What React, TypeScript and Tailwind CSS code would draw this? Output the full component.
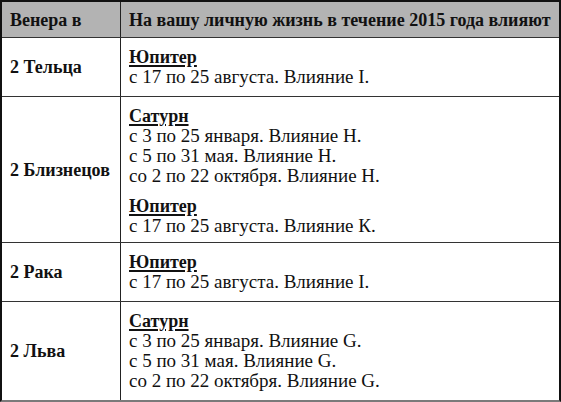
import React from "react";

type Entry = { planet: string; lines: string[] };
type Row = { sign: string; height: string; entries: Entry[] };

const rows: Row[] = [
  {
    sign: "2 Тельца",
    height: "h-[59px]",
    entries: [{ planet: "Юпитер", lines: ["с 17 по 25 августа. Влияние I."] }],
  },
  {
    sign: "2 Близнецов",
    height: "h-[146px]",
    entries: [
      {
        planet: "Сатурн",
        lines: [
          "с 3 по 25 января. Влияние Н.",
          "с 5 по 31 мая. Влияние Н.",
          "со 2 по 22 октября. Влияние Н.",
        ],
      },
      { planet: "Юпитер", lines: ["с 17 по 25 августа. Влияние К."] },
    ],
  },
  {
    sign: "2 Рака",
    height: "h-[59px]",
    entries: [{ planet: "Юпитер", lines: ["с 17 по 25 августа. Влияние I."] }],
  },
  {
    sign: "2 Льва",
    height: "flex-1",
    entries: [
      {
        planet: "Сатурн",
        lines: [
          "с 3 по 25 января. Влияние G.",
          "с 5 по 31 мая. Влияние G.",
          "со 2 по 22 октября. Влияние G.",
        ],
      },
    ],
  },
];

export default function App() {
  return (
    <div className="w-[561px] h-[402px] bg-white [font-family:'Liberation_Serif',serif] text-[19px] leading-[20px] text-[#111]">
      <div className="flex flex-col h-full border-2 border-[#111] border-b-[#7a7a7a]">
        <div className="flex h-[36px] bg-[#b3b3b3] border-b border-[#333] font-bold text-[18px]">
          <div className="w-[119px] shrink-0 flex items-center pl-2 border-r border-[#222]">
            Венера в
          </div>
          <div className="flex-1 flex items-center pl-2">
            На вашу личную жизнь в течение 2015 года влияют
          </div>
        </div>
        {rows.map((row, i) => (
          <div
            key={row.sign}
            className={`flex ${row.height} ${i < rows.length - 1 ? "border-b border-[#333]" : ""}`}
          >
            <div className="w-[119px] shrink-0 flex items-center pl-2 font-bold text-[18px] border-r border-[#222]">
              {row.sign}
            </div>
            <div className="flex-1 flex flex-col gap-2.5 pl-2 pt-[9px]">
              {row.entries.map((e, j) => (
                <div key={j}>
                  <div className="font-bold text-[18px] underline decoration-2 underline-offset-2">
                    {e.planet}
                  </div>
                  {e.lines.map((l) => (
                    <div key={l}>{l}</div>
                  ))}
                </div>
              ))}
            </div>
          </div>
        ))}
      </div>
    </div>
  );
}
